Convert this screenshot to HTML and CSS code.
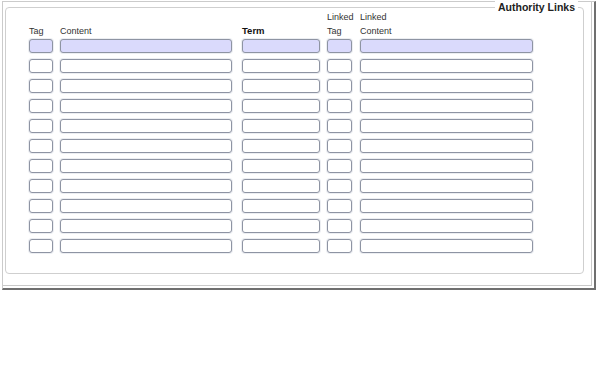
FILE: index.html
```html
<!DOCTYPE html>
<html lang="en">
<head>
    <meta charset="UTF-8">
    <title>Authority Links</title>
    <link rel="stylesheet" href="styles.css">
</head>
<body>
    <div class="panel">
        <div class="group">
            <div class="group-title">Authority Links</div>

            <div class="grid grid-head">
                <div class="head">Tag</div>
                <div class="head">Content</div>
                <div class="head head-bold">Term</div>
                <div class="head">Linked<br>Tag</div>
                <div class="head">Linked<br>Content</div>
            </div>

            <div class="grid grid-body" id="rows"></div>
        </div>
    </div>

    <script>
        // Build the 11 link rows, first one is the selected (current) row
        const rows = document.getElementById('rows');
        const cols = ['tag', 'content', 'term', 'ltag', 'lcontent'];
        for (let i = 0; i < 11; i++) {
            cols.forEach(function (c) {
                const input = document.createElement('input');
                input.type = 'text';
                input.className = 'field field-' + c + (i === 0 ? ' current' : '');
                rows.appendChild(input);
            });
        }
    </script>
</body>
</html>
```

FILE: styles.css
```css
body {
    margin: 0;
    padding: 0;
    background: #ffffff;
    font-family: "Liberation Sans", Arial, sans-serif;
    color: #333333;
}

.panel {
    box-sizing: border-box;
    width: 594px;
    height: 289px;
    margin: 1px 0 0 2px;
    padding: 5px 0 0 2px;
    border-top: 1px solid #cbcbcb;
    border-left: 1px solid #cbcbcb;
    border-right: 2px solid #6f6f6f;
    border-bottom: 2px solid #6f6f6f;
    box-shadow: inset -2px -2px 0 #ffffff, inset -3px -3px 0 #c9c9c9;
}

.group {
    position: relative;
    box-sizing: border-box;
    width: 579px;
    height: 267px;
    padding: 1.5px 0 0 23px;
    border: 1px solid #cfcfcf;
    border-radius: 4px;
}

.group-title {
    position: absolute;
    top: -7px;
    right: 5px;
    padding: 0 3px;
    background: #ffffff;
    font-size: 10.5px;
    font-weight: 700;
    line-height: 13px;
    color: #222222;
}

.grid {
    display: grid;
    grid-template-columns: 31px 182px 85px 33px 173px;
}

.grid-head {
    height: 28px;
    margin-bottom: 1.5px;
    align-items: end;
}

.head {
    font-size: 9px;
    line-height: 14px;
}

.head-bold {
    font-size: 9.5px;
    font-weight: 700;
    color: #111111;
}

.grid-body {
    row-gap: 6px;
}

.field {
    box-sizing: border-box;
    height: 14px;
    margin: 0;
    padding: 0 3px;
    border: 1px solid #8e94a3;
    border-radius: 3px;
    background: #ffffff;
    box-shadow: 0 0 0 1px #eceef2;
    font-size: 9px;
    font-family: inherit;
}

.field.current {
    background: #dadafc;
}

.field-tag {
    width: 24px;
}

.field-content {
    width: 172px;
}

.field-term {
    width: 78px;
}

.field-ltag {
    width: 25px;
}

.field-lcontent {
    width: 173px;
}
```
